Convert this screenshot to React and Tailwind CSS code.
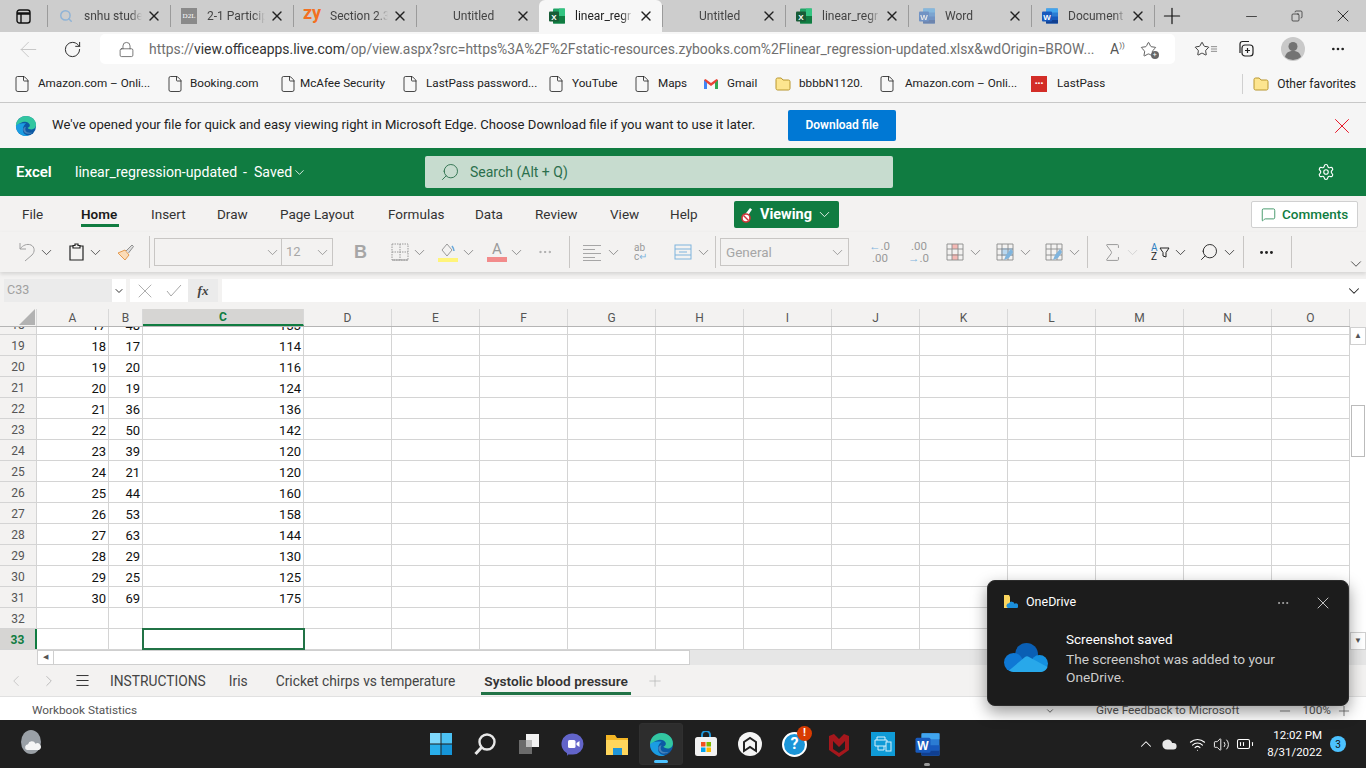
import { ChevronDown, ChevronLeft, ChevronRight, X, Plus, Minus, Copy, ArrowLeft, RotateCw, Lock, Star, File, Settings, Search, MessageSquare, MoreHorizontal, Sigma, Menu, Volume2, Wifi, ChevronUp, BatteryMedium, Cloud } from 'lucide-react'

const font = "font-['Roboto','Liberation_Sans',sans-serif]"

const tabs = [
  { title: 'snhu stude', icon: 'search' },
  { title: '2-1 Particip', icon: 'd2l' },
  { title: 'Section 2.3', icon: 'zy' },
  { title: 'Untitled', icon: 'none' },
  { title: 'linear_regr', icon: 'excel', active: true },
  { title: 'Untitled', icon: 'none' },
  { title: 'linear_regr', icon: 'excel' },
  { title: 'Word', icon: 'wordfaded' },
  { title: 'Document', icon: 'word' },
]

const bookmarks = [
  { label: 'Amazon.com – Onli...', w: 'w-[153px]', gap: 'gap-[7px]' },
  { label: 'Booking.com', w: 'w-[113px]', gap: 'gap-[6px]' },
  { label: 'McAfee Security', w: 'w-[122px]', gap: 'gap-[3px]' },
  { label: 'LastPass password...', w: 'w-[146px]', gap: 'gap-[7px]' },
  { label: 'YouTube', w: 'w-[86px]', gap: 'gap-[7px]' },
  { label: 'Maps', w: 'w-[70px]', gap: 'gap-[7px]' },
  { label: 'Gmail', w: 'w-[71px]', gap: 'gap-[8px]', icon: 'gmail' },
  { label: 'bbbbN1120.', w: 'w-[104px]', gap: 'gap-[7px]', icon: 'folder' },
  { label: 'Amazon.com – Onli...', w: 'w-[153px]', gap: 'gap-[9px]' },
  { label: 'LastPass', w: 'w-[80px]', gap: 'gap-[10px]', icon: 'lastpass' },
]

const ribbon = [
  { label: 'File', w: 'w-[59px]' },
  { label: 'Home', w: 'w-[70px]', active: true },
  { label: 'Insert', w: 'w-[66px]' },
  { label: 'Draw', w: 'w-[63px]' },
  { label: 'Page Layout', w: 'w-[108px]' },
  { label: 'Formulas', w: 'w-[87px]' },
  { label: 'Data', w: 'w-[60px]' },
  { label: 'Review', w: 'w-[75px]' },
  { label: 'View', w: 'w-[60px]' },
  { label: 'Help', w: 'w-[52px]' },
]

const columns = [
  ['A', 'w-[72px]'], ['B', 'w-[34px]'], ['C', 'w-[161px]'], ['D', 'w-[88px]'], ['E', 'w-[88px]'], ['F', 'w-[88px]'], ['G', 'w-[88px]'],
  ['H', 'w-[88px]'], ['I', 'w-[88px]'], ['J', 'w-[88px]'], ['K', 'w-[88px]'], ['L', 'w-[88px]'], ['M', 'w-[88px]'], ['N', 'w-[88px]'], ['O', 'w-[78px]'],
]

const rows = [
  [19, 18, 17, 114], [20, 19, 20, 116], [21, 20, 19, 124], [22, 21, 36, 136], [23, 22, 50, 142], [24, 23, 39, 120], [25, 24, 21, 120],
  [26, 25, 44, 160], [27, 26, 53, 158], [28, 27, 63, 144], [29, 28, 29, 130], [30, 29, 25, 125], [31, 30, 69, 175], [32], [33],
]

function ExcelIcon() {
  return (
    <svg width="18" height="18" viewBox="0 0 18 18">
      <rect x="5" y="1.5" width="12" height="15" rx="1" fill="#21a366" />
      <rect x="5" y="9" width="12" height="7.5" fill="#107c41" />
      <rect x="11" y="1.5" width="6" height="7.5" fill="#33c481" />
      <rect x="1" y="4.5" width="10" height="10" rx="1" fill="#185c37" />
      <text x="6" y="12.5" textAnchor="middle" fontSize="8" fontWeight="700" fill="#fff" fontFamily="Liberation Sans">X</text>
    </svg>
  )
}

function WordIcon({ faded, size = 18 }) {
  return (
    <svg width={size} height={size} viewBox="0 0 18 18" className={faded ? 'opacity-50' : ''}>
      <rect x="5" y="1.5" width="12" height="15" rx="1" fill="#2b7cd3" />
      <rect x="5" y="1.5" width="12" height="4" fill="#41a5ee" />
      <rect x="5" y="9.5" width="12" height="3.5" fill="#185abd" />
      <rect x="5" y="13" width="12" height="3.5" fill="#103f91" />
      <rect x="1" y="4.5" width="10" height="10" rx="1" fill="#185abd" />
      <text x="6" y="12.5" textAnchor="middle" fontSize="8" fontWeight="700" fill="#fff" fontFamily="Liberation Sans">W</text>
    </svg>
  )
}

function EdgeIcon({ size = 22 }) {
  return (
    <svg width={size} height={size} viewBox="0 0 24 24">
      <circle cx="12" cy="12" r="11" fill="#0c59a4" />
      <path d="M1 12C1 5.900 5.900 1 12 1c6 0 11 4.300 11 10 0 3-2.400 4.800-5 4.800-2.200 0-3.800-.8-4.200-1.800 2-.6 2.800-2 2.200-3.600C15 8.200 12.600 7 10 7.400 5 8.200 3 11.500 1 12z" fill="#33c6a0" />
      <path d="M1 12c0 6.100 4.900 11 11 11 1.600 0 2.600-.3 3.600-.8-3.600.3-7-2-7-6.200 0-3 1.800-5.800 3.600-6.600C8 8.800 2.800 9 1 12z" fill="#1b9de2" />
      <path d="M9 15.500c0 3.500 3.500 5.500 7 5 1-.1 2.200-.8 3-1.500-3 .8-6.500.5-7.500-2-.5-1.500-.2-3 .6-4.200C10.500 13 9 14 9 15.500z" fill="#fff" opacity=".25" />
    </svg>
  )
}

function FolderIcon({ size = 18 }) {
  return (
    <svg width={size} height={size} viewBox="0 0 18 18">
      <path d="M2 4.500C2 3.700 2.700 3 3.500 3h3.700l1.800 2h5.500c.8 0 1.500.7 1.500 1.500v7c0 .8-.7 1.500-1.500 1.500h-11C2.700 15 2 14.300 2 13.500z" fill="#fde58f" stroke="#b8962f" strokeWidth="1" />
    </svg>
  )
}

function TabIcon({ icon }) {
  if (icon === 'search') return <Search size={14} strokeWidth={2.5} className="text-[#8fb3d6]" />
  if (icon === 'd2l') return <span className="flex h-4 w-4 items-center justify-center bg-[#8a8a8a] font-['Liberation_Serif',serif] text-[7px] text-white">D2L</span>
  if (icon === 'zy') return <span className="-mt-[7px] text-[18px] leading-none font-bold text-[#f37021]">zy</span>
  if (icon === 'excel') return <ExcelIcon />
  if (icon === 'word') return <WordIcon />
  if (icon === 'wordfaded') return <WordIcon faded />
  return <span className="w-4" />
}

function TabStrip() {
  return (
    <div className="flex h-[32px] items-stretch bg-[#cdcdcd]">
      <div className="flex w-[47px] items-center justify-center">
        <svg width="15" height="15" viewBox="0 0 15 15" fill="none" stroke="#111" strokeWidth="1.400">
          <rect x="1" y="1" width="13" height="13" rx="2.500" />
          <path d="M1 4.500h13" strokeWidth="2.500" />
          <path d="M5 4.500V14" />
        </svg>
      </div>
      {tabs.map((tab, i) => (
        <div key={i} className={`flex w-[123px] items-center pr-[8px] ${tab.active ? 'rounded-t-[6px] bg-[#f7f7f7]' : ''}`}>
          {!tab.active && <span className="h-[22px] w-px bg-[#9b9b9b]" />}
          <span className="ml-px flex w-[34px] items-center justify-center"><TabIcon icon={tab.icon} /></span>
          <span className={`ml-[1px] w-[58px] overflow-hidden text-[12px] whitespace-nowrap [mask-image:linear-gradient(to_right,black_80%,transparent)] ${tab.active ? 'text-[#222]' : 'text-[#444]'}`}>{tab.title}</span>
          <X size={16} strokeWidth={2} className="ml-auto text-[#222]" />
        </div>
      ))}
      <span className="my-[5px] h-[22px] w-px bg-[#9b9b9b]" />
      <div className="flex w-[34px] items-center justify-center"><Plus size={26} strokeWidth={1.1} className="text-[#111]" /></div>
      <div className="ml-auto flex items-center text-[#222]">
        <span className="flex w-[46px] justify-center"><Minus size={17} strokeWidth={1.1} /></span>
        <span className="flex w-[46px] justify-center"><Copy size={12} strokeWidth={1.4} className="-scale-x-100 text-[#222]" /></span>
        <span className="flex w-[46px] justify-center"><X size={20} strokeWidth={1.1} /></span>
      </div>
    </div>
  )
}

function AddressBar() {
  return (
    <div className="flex h-[34px] items-center bg-[#f7f7f7]">
      <div className="flex w-[100px] items-center text-[#333]">
        <span className="flex w-[56px] justify-center"><ArrowLeft size={25} strokeWidth={0.9} className="text-[#c4c4c4]" /></span>
        <span className="flex w-[32px] justify-center"><RotateCw size={19} strokeWidth={1.2} className="text-[#222]" /></span>
      </div>
      <div className="flex h-[30px] w-[1075px] items-center rounded-[5px] bg-white">
        <Lock size={17} strokeWidth={1.1} className="ml-[18px] text-[#555]" />
        <span className="ml-[14px] w-[946px] overflow-hidden text-[13.9px] whitespace-nowrap text-[#6f6f6f]">
          https://<span className="text-[#333]">view.officeapps.live.com</span>/op/view.aspx?src=https%3A%2F%2Fstatic-resources.zybooks.com%2Flinear_regression-updated.xlsx&wdOrigin=BROW...
        </span>
        <span className="ml-[15px] text-[14px] text-[#555]">A<span className="align-super text-[8px]">))</span></span>
        <span className="relative ml-[15px]">
          <Star size={17} strokeWidth={1.2} className="text-[#444]" />
          <span className="absolute right-[-2px] bottom-[-1px] h-[8px] w-[8px] rounded-full bg-[#666] text-center text-[7px] leading-[8px] text-white">+</span>
        </span>
      </div>
      <div className="ml-[19px] flex items-center text-[#222]">
        <span className="flex items-center"><Star size={16} strokeWidth={1.3} /><Menu size={8} strokeWidth={1.5} /></span>
        <svg width="20" height="20" viewBox="0 0 20 20" fill="none" stroke="#222" strokeWidth="1.200" className="ml-[18px]">
          <rect x="6" y="6" width="11" height="11" rx="3" />
          <path d="M11.500 9v5M9 11.500h5" />
          <path d="M4 14V5a2.500 2.500 0 0 1 2.500-2.500H13" />
        </svg>
        <svg width="24" height="24" viewBox="0 0 24 24" className="ml-[25px]">
          <circle cx="12" cy="12" r="12" fill="#c9c9c9" />
          <circle cx="12" cy="9.500" r="4.500" fill="#737373" />
          <path d="M4 20c1-4.500 4-6 8-6s7 1.500 8 6a12 12 0 0 1-16 0z" fill="#737373" />
        </svg>
        <MoreHorizontal size={16} strokeWidth={2} className="ml-[25px]" />
      </div>
    </div>
  )
}

function Bookmarks() {
  return (
    <div className="flex h-[37px] items-center border-b border-[#c8c8c8] bg-[#f7f7f7] pr-[10px] pl-[13px] text-[11.7px] text-[#222]">
      {bookmarks.map((b, i) => (
        <div key={i} className={`flex shrink-0 items-center whitespace-nowrap ${b.w} ${b.gap}`}>
          {b.icon === 'gmail' ? (
            <svg width="16" height="16" viewBox="0 0 16 16"><path d="M1 4v9h3V7l4 3 4-3v6h3V4l-1.500-1L8 7 2.500 3z" fill="#ea4335" /><path d="M1 4v9h3V7z" fill="#4285f4" /><path d="M15 4v9h-3V7z" fill="#34a853" /></svg>
          ) : b.icon === 'folder' ? (
            <FolderIcon />
          ) : b.icon === 'lastpass' ? (
            <span className="flex h-[16px] w-[16px] items-center justify-center bg-[#d32d27] text-[8px] leading-none font-bold text-white">•••</span>
          ) : (
            <File size={18} strokeWidth={1.1} className="shrink-0 text-[#222]" />
          )}
          {b.label}
        </div>
      ))}
      <span className="ml-auto h-[20px] w-px bg-[#d0d0d0]" />
      <div className="ml-[9px] flex items-center gap-[7px] whitespace-nowrap text-[12px]"><FolderIcon />Other favorites</div>
    </div>
  )
}

function InfoBar() {
  return (
    <div className="flex h-[45px] items-center bg-[#f5f5f5]">
      <span className="ml-[15px]"><EdgeIcon /></span>
      <span className="ml-[15px] w-[736px] pb-[2px] text-[13.1px] whitespace-nowrap text-[#222]">We've opened your file for quick and easy viewing right in Microsoft Edge. Choose Download file if you want to use it later.</span>
      <button className="h-[31px] w-[108px] rounded-[2px] bg-[#0078d4] pb-[1px] text-[12px] font-semibold text-white">Download file</button>
      <X size={26} strokeWidth={0.9} className="mr-[11px] ml-auto text-[#e81123]" />
    </div>
  )
}

function ExcelHeader() {
  return (
    <div className="flex h-[48px] items-center bg-[#107c41] text-white">
      <div className="flex w-[425px] items-center pt-[1px] text-[14.1px]">
        <span className="ml-[16px] w-[59px] text-[15px] font-semibold">Excel</span>
        <span>linear_regression-updated</span>
        <span className="ml-[6px]">-</span>
        <span className="ml-[7px]">Saved</span>
        <ChevronDown size={15} strokeWidth={1.3} />
      </div>
      <div className="flex h-[32px] w-[468px] items-center rounded-[2px] bg-[#c7dccf] text-[#2b6f4c]">
        <Search size={20} strokeWidth={1.1} className="ml-[15px] -scale-x-100" />
        <span className="ml-[10px] text-[14px]">Search (Alt + Q)</span>
      </div>
      <Settings size={18} strokeWidth={1.5} className="mr-[31px] ml-auto" />
    </div>
  )
}

function RibbonTabs() {
  return (
    <div className="flex h-[36px] items-center bg-[#f3f2f1] pl-[22px] text-[13.5px] text-[#333]">
      {ribbon.map((t) => (
        <div key={t.label} className={`relative flex h-full items-center ${t.w}`}>
          <span className={t.active ? 'font-semibold text-[#1a1a1a]' : ''}>{t.label}</span>
          {t.active && <span className="absolute bottom-[5px] left-0 h-[3px] w-[38px] bg-[#107c41]" />}
        </div>
      ))}
      <div className="ml-[12px] flex h-[27px] w-[105px] items-center justify-center gap-[3px] rounded-[2px] bg-[#107c41] pt-[1px] text-[14.5px] font-bold text-white">
        <svg width="17" height="17" viewBox="0 0 17 17"><path d="M3 11 10 2l2 1.500-6 9z" fill="#fff" /><circle cx="6" cy="12" r="4" fill="#fff" stroke="#d13438" strokeWidth="1.600" /><path d="M3.500 9.500l5 5" stroke="#d13438" strokeWidth="1.400" /></svg>
        Viewing
        <ChevronDown size={17} strokeWidth={1.2} className="ml-[1px]" />
      </div>
      <button className="mr-[8px] ml-auto flex h-[27px] w-[107px] items-center justify-center gap-[6px] rounded-[2px] border border-[#d0d0d0] bg-white text-[13.5px] font-medium text-[#107c41]">
        <MessageSquare size={15} strokeWidth={1.2} />Comments
      </button>
    </div>
  )
}

function Caret({ c = 'text-[#777]', m }) {
  return (
    <span className={`flex w-[11px] justify-center ${m} ${c}`}>
      <ChevronDown size={17} strokeWidth={1.1} className="shrink-0" />
    </span>
  )
}

function Sep({ m }) {
  return <span className={`h-[32px] w-px bg-[#c8c6c4] ${m}`} />
}

function GridGlyph({ fill, brush }) {
  return (
    <svg width="18" height="18" viewBox="0 0 18 18" fill="none">
      {fill === 'pink' && <><rect x="6" y="1" width="6" height="5" fill="#f4b8b4" /><rect x="6" y="11" width="6" height="6" fill="#f4b8b4" /></>}
      {fill === 'blue' && <rect x="5" y="5" width="12" height="8" fill="#b9d8f0" />}
      <path d="M1 1h16v16H1zM1 6h16M1 12h16M6 1v16M12 1v16" stroke="#8b8b8b" strokeWidth=".9" />
      {brush && <path d="M15 6l-5 6-2 5 5-2 4-6z" fill="#7fb4dd" />}
    </svg>
  )
}

function Toolbar() {
  return (
    <div className="relative z-10 flex h-[40px] items-center bg-[#f3f2f1] pl-[18px] text-[#a6a6a6] shadow-[0_2px_4px_rgba(0,0,0,0.13)]">
      <svg width="18" height="20" viewBox="0 0 18 20" fill="none" stroke="#a0a0a0"><path d="M2 1v6h6" /><path d="M2 7c3-4 7-5.500 11-4 4 2 4 7 1 10l-7 6" /></svg>
      <Caret c="text-[#333]" m="ml-[5px]" />
      <svg width="17" height="18" viewBox="0 0 17 18" fill="none" stroke="#222" strokeWidth="1.200" className="ml-[16px]"><path d="M5 3H2v14h13V3h-3" /><path d="M5 5V2.500h2V1h3v1.500h2V5z" /></svg>
      <Caret c="text-[#333]" m="ml-[5px]" />
      <svg width="17" height="17" viewBox="0 0 17 17" fill="none" className="ml-[16px]"><path d="M1 9l7-3 4 5-4 5z" fill="#fbdcb8" stroke="#e59a4e" /><path d="M9 7l6-6 1.500 1.500-5 6.500" fill="#ddd" stroke="#8f8f8f" /></svg>
      <Sep m="ml-[15px]" />
      <div className="ml-[4px] flex h-[28px] items-center border border-[#c8c6c4]">
        <div className="flex h-full w-[127px] items-center justify-end border-r border-[#c8c6c4] pr-[3px]"><Caret c="text-[#888]" /></div>
        <div className="flex h-full w-[50px] items-center justify-between px-[4px] text-[13px]">12<Caret c="text-[#888]" /></div>
      </div>
      <span className="ml-[21px] font-['Liberation_Sans',sans-serif] text-[18px] font-bold text-[#a6a6a6]">B</span>
      <svg width="18" height="18" viewBox="0 0 18 18" fill="none" stroke="#999" className="ml-[24px]"><path d="M1 1h16v16H1zM9 1v16M1 9h16" strokeDasharray="1.500 1" /><path d="M1 17h16" /></svg>
      <Caret m="ml-[5px]" />
      <span className="ml-[13px] flex w-[20px] flex-col items-center">
        <svg width="16" height="15" viewBox="0 0 16 15" fill="none" stroke="#9a9a9a"><path d="M7 1 2 7l5 6 5-6z" /><path d="M12 3c1.500 2 2 4 2 5" stroke="#6aa9db" strokeWidth="1.500" /></svg>
        <span className="h-[4px] w-[20px] bg-[#fff47a]" />
      </span>
      <Caret m="ml-[5px]" />
      <span className="ml-[13px] flex w-[20px] flex-col items-center">
        <span className="text-[15px] leading-[15px] text-[#9a9a9a]">A</span>
        <span className="h-[5px] w-[20px] bg-[#f28b8b]" />
      </span>
      <Caret m="ml-[4px]" />
      <MoreHorizontal size={16} strokeWidth={1.5} className="ml-[15px]" />
      <Sep m="ml-[16px]" />
      <svg width="18" height="18" viewBox="0 0 18 18" stroke="#a6a6a6" className="ml-[13px]"><path d="M0 2.500h18M0 6.500h12M0 10.500h18M0 14.500h12M0 17.500h18" /></svg>
      <Caret m="ml-[7px]" />
      <span className="ml-[15px] flex w-[18px] flex-col text-[10px] leading-[9px] text-[#999]"><span>ab</span><span>c<span className="text-[#7fb4dd]">↵</span></span></span>
      <svg width="18" height="18" viewBox="0 0 18 18" fill="none" stroke="#7fb4dd" className="ml-[22px]"><rect x="1" y="2" width="16" height="14" /><path d="M1 6h16M1 12h16M5 9h8" /></svg>
      <Caret m="ml-[6px]" />
      <Sep m="ml-[6px]" />
      <div className="ml-[4px] flex h-[28px] w-[129px] items-center justify-between border border-[#c8c6c4] px-[5px] text-[13.5px]">General<Caret c="text-[#888]" /></div>
      <span className="ml-[20px] flex w-[19px] flex-col text-right text-[11.5px] leading-[12px] text-[#999]"><span><span className="text-[#7fb4dd]">←</span>.0</span><span>.00</span></span>
      <span className="ml-[20px] flex w-[19px] flex-col text-right text-[11.5px] leading-[12px] text-[#999]"><span>.00</span><span><span className="text-[#7fb4dd]">→</span>.0</span></span>
      <span className="ml-[19px]"><GridGlyph fill="pink" /></span>
      <Caret m="ml-[6px]" />
      <span className="ml-[15px]"><GridGlyph fill="blue" brush /></span>
      <Caret m="ml-[6px]" />
      <span className="ml-[14px]"><GridGlyph brush /></span>
      <Caret m="ml-[6px]" />
      <Sep m="ml-[7px]" />
      <Sigma size={19} strokeWidth={1} className="ml-[15px] scale-125 text-[#999]" />
      <Caret c="text-[#ccc]" m="ml-[5px]" />
      <span className="ml-[13px] flex w-[19px] items-center text-[#222]">
        <span className="flex w-[8px] flex-col text-[10px] leading-[9px]"><span className="text-[#2f7fc1]">A</span><span>Z</span></span>
        <svg width="11" height="11" viewBox="0 0 11 11" fill="none" stroke="#222"><path d="M1 1h9L7 5.500V10L4 9V5.500z" /></svg>
      </span>
      <Caret c="text-[#222]" m="ml-[5px]" />
      <Search size={20} strokeWidth={1.1} className="ml-[13px] -scale-x-100 text-[#222]" />
      <Caret c="text-[#222]" m="ml-[5px]" />
      <Sep m="ml-[8px]" />
      <MoreHorizontal size={17} strokeWidth={2.2} className="ml-[14px] text-[#222]" />
      <Sep m="ml-[16px]" />
      <ChevronDown size={18} strokeWidth={1.1} className="absolute right-[1px] bottom-[-1px] text-[#333]" />
    </div>
  )
}

function FormulaBar() {
  return (
    <div className="flex h-[36px] items-center gap-[4px] bg-[#f3f2f1] pt-[1px] pl-[4px]">
      <div className="flex h-[23px] w-[122px] items-center bg-[#ebebeb] pl-[3px] text-[12.5px] text-[#a0a0a0]">
        C33
        <span className="ml-auto flex h-full w-[14px] items-center justify-center bg-white"><ChevronDown size={12} strokeWidth={2} className="text-[#333]" /></span>
      </div>
      <div className="flex h-[23px] w-[88px] items-center bg-white">
        <span className="flex w-[30px] justify-center"><X size={24} strokeWidth={0.8} className="text-[#9a9a9a]" /></span>
        <span className="flex w-[28px] justify-center">
          <svg width="16" height="13" viewBox="0 0 16 13" fill="none" stroke="#a8a8a8"><path d="M1 7l4 5L15 1" /></svg>
        </span>
        <span className="flex h-full w-[30px] items-center justify-center bg-[#ebebeb] font-['Liberation_Serif',serif] text-[13px] font-bold text-[#444] italic">fx</span>
      </div>
      <div className="flex h-[23px] flex-1 items-center justify-end bg-white pr-[3px]"><ChevronDown size={18} strokeWidth={1.4} className="text-[#222]" /></div>
    </div>
  )
}

function ColumnHeaders() {
  return (
    <div className="relative z-10 flex h-[19px] border-b border-[#b5b5b5] bg-[#f3f2f1] pt-[1px] text-[12px] text-[#555]">
      <div className="relative w-[37px] border-r border-[#d8d8d8]">
        <svg width="16" height="16" viewBox="0 0 16 16" className="absolute right-[1px] bottom-[1px]"><path d="M16 0v16H0z" fill="#b2b2b2" /></svg>
      </div>
      {columns.map(([c, w]) => (
        <div key={c} className={`flex items-center justify-center border-r border-[#d8d8d8] ${w} ${c === 'C' ? 'border-b-2 border-b-[#107c41] bg-[#d6d5d3] font-bold text-[#107c41]' : ''}`}>{c}</div>
      ))}
    </div>
  )
}

function Cells({ data }) {
  const [num, a, b, c] = data
  const selected = num === 33
  return (
    <div className="flex h-[21px] border-b border-[#d4d4d4]">
      <div className={`flex h-full w-[37px] items-center justify-center border-r border-[#d4d4d4] pt-[1px] text-[12px] ${selected ? 'border-r-2 border-r-[#107c41] bg-[#d6d5d3] font-bold text-[#107c41]' : 'bg-[#f3f2f1] text-[#555]'}`}>{num}</div>
      {columns.map(([col, w], i) => (
        <div key={col} className={`relative box-border h-full shrink-0 border-r border-[#d4d4d4] pt-[2px] pr-[2px] text-right text-[13px] text-[#111] ${w} ${selected && col === 'C' ? 'z-10 outline-2 -outline-offset-1 outline-[#217346]' : ''}`}>
          {i === 0 ? a : i === 1 ? b : i === 2 ? c : ''}
        </div>
      ))}
    </div>
  )
}

function Sheet() {
  return (
    <div className="flex h-[342px] items-start bg-white">
      <div className="w-[1350px]">
        <ColumnHeaders />
        <div className="h-[8px] overflow-hidden">
          <div className="-mt-[13px]"><Cells data={[18, 17, 48, 133]} /></div>
        </div>
        {rows.map((r) => <Cells key={r[0]} data={r} />)}
      </div>
      <div className="flex h-full w-[16px] flex-col items-center bg-white">
        <div className="h-[19px] w-full bg-[#f3f2f1]" />
        <div className="flex h-[18px] w-full items-center justify-center border border-[#d0d0d0] text-[8px] text-[#555]">▲</div>
        <div className="mt-[60px] h-[52px] w-[14px] border border-[#bbb] bg-white" />
        <div className="mt-auto flex h-[18px] w-full items-center justify-center border border-[#d0d0d0] text-[8px] text-[#555]">▼</div>
      </div>
    </div>
  )
}

function SheetTabs() {
  return (
    <div className="flex flex-col">
      <div className="flex h-[15px] items-stretch bg-[#f3f2f1]">
        <div className="ml-[37px] flex w-[17px] items-center justify-center border border-[#cfcfcf] bg-white text-[7px] text-[#555]">◀</div>
        <div className="w-[636px] border-y border-r border-[#cfcfcf] bg-white" />
        <div className="flex-1 bg-[#e6e6e6]" />
      </div>
      <div className="flex h-[32px] items-center border-b border-[#e1e1e1] bg-[#f3f2f1] text-[13.8px] text-[#444]">
        <ChevronLeft size={18} strokeWidth={1.1} className="ml-[7px] text-[#c0c0c0]" />
        <ChevronRight size={18} strokeWidth={1.1} className="ml-[15px] text-[#b0b0b0]" />
        <Menu size={17} strokeWidth={1.3} className="ml-[16px] text-[#222]" />
        <span className="ml-[19px] pt-[1px]">INSTRUCTIONS</span>
        <span className="ml-[23px] pt-[1px]">Iris</span>
        <span className="ml-[28px] pt-[1px]">Cricket chirps vs temperature</span>
        <span className="relative ml-[29px] flex h-full items-center pt-[1px] text-[13.7px] font-semibold text-[#333]">
          Systolic blood pressure
          <span className="absolute right-[-3px] bottom-[1px] left-[-3px] h-[3px] bg-[#217346]" />
        </span>
        <Plus size={18} strokeWidth={1} className="ml-[18px] text-[#b5b5b5]" />
      </div>
    </div>
  )
}

function StatusBar() {
  return (
    <div className="flex h-[23px] items-center bg-white pt-[5px] pl-[32px] text-[11.8px] text-[#555]">
      Workbook Statistics
      <span className="ml-auto flex items-center">
        <ChevronDown size={10} strokeWidth={2} className="mr-[41px]" />
        <span>Give Feedback to Microsoft</span>
        <Minus size={16} strokeWidth={1.1} className="ml-[38px]" />
        <span className="ml-[9px]">100%</span>
        <Plus size={16} strokeWidth={1.1} className="mr-[14px] ml-[5px]" />
      </span>
    </div>
  )
}

function Taskbar() {
  return (
    <div className="flex h-[48px] items-center bg-[#1f1f1f] text-white">
      <svg width="24" height="28" viewBox="0 0 24 28" className="ml-[21px]">
        <ellipse cx="10" cy="12" rx="10" ry="12" fill="#9aa0a6" />
        <path d="M6 20a3 3 0 0 1 1-5.800 4 4 0 0 1 7.500-.5A3.200 3.200 0 0 1 18 20z" fill="#f5f5f5" />
      </svg>
      <div className="ml-[374px] flex items-center">
        <span className="flex h-[48px] w-[44px] items-center justify-center">
          <svg width="24" height="24" viewBox="0 0 24 24"><rect x="1" y="1" width="10.500" height="10.500" fill="#7fd8fb" /><rect x="12.500" y="1" width="10.500" height="10.500" fill="#4cc2f4" /><rect x="1" y="12.500" width="10.500" height="10.500" fill="#29aeea" /><rect x="12.500" y="12.500" width="10.500" height="10.500" fill="#1595d8" /></svg>
        </span>
        <span className="flex h-[48px] w-[44px] items-center justify-center">
          <svg width="24" height="24" viewBox="0 0 24 24" fill="none" stroke="#e8e8e8"><circle cx="14" cy="10" r="7.500" strokeWidth="2.400" /><path d="M8.500 15.500 2.500 22" strokeWidth="3" /></svg>
        </span>
        <span className="flex h-[48px] w-[44px] items-center justify-center">
          <svg width="24" height="24" viewBox="0 0 24 24"><rect x="9" y="2" width="13" height="13" fill="#f2f2f2" /><rect x="2" y="8" width="13" height="14" fill="#6b6b6b" /><rect x="9" y="8" width="6" height="7" fill="#bdbdbd" /></svg>
        </span>
        <span className="flex h-[48px] w-[44px] items-center justify-center">
          <svg width="24" height="24" viewBox="0 0 24 24"><path d="M12 1.500a10.500 10.500 0 0 1 0 21H7l-1 1.500v-2.800A10.500 10.500 0 0 1 12 1.500z" fill="#6264c9" /><rect x="7" y="8" width="7.500" height="8" rx="1.500" fill="#fff" /><path d="M15.500 11l3-2v6l-3-2z" fill="#fff" /></svg>
        </span>
        <span className="flex h-[48px] w-[44px] items-center justify-center">
          <svg width="24" height="24" viewBox="0 0 24 24"><path d="M1 3h9l2 3h11v17H1z" fill="#f4b625" /><path d="M1 8h22v15H1z" fill="#ffd65c" /><rect x="8" y="16" width="9" height="7" fill="#1f95d8" /></svg>
        </span>
        <span className="relative flex h-[42px] w-[44px] items-center justify-center rounded-[3px] border border-[#303030] bg-[#2d2d2d]">
          <EdgeIcon size={25} />
          <span className="absolute bottom-[1px] h-[3px] w-[14px] rounded-full bg-[#4cc2ff]" />
        </span>
        <span className="flex h-[48px] w-[45px] items-center justify-center">
          <svg width="24" height="26" viewBox="0 0 24 26"><path d="M8 7V4a4 4 0 0 1 8 0v3" fill="none" stroke="#1f95d8" strokeWidth="2" /><rect x="1" y="6" width="22" height="19" rx="2.500" fill="#f2f2f2" /><rect x="7" y="11" width="4.500" height="4.500" fill="#f25022" /><rect x="12.500" y="11" width="4.500" height="4.500" fill="#7fba00" /><rect x="7" y="16.500" width="4.500" height="4.500" fill="#00a4ef" /><rect x="12.500" y="16.500" width="4.500" height="4.500" fill="#ffb900" /></svg>
        </span>
        <span className="flex h-[48px] w-[44px] items-center justify-center">
          <svg width="26" height="26" viewBox="0 0 26 26"><circle cx="13" cy="13" r="12" fill="#f4f4f4" /><path d="M7 20V11l6-4 6 4v9l-6-4z" fill="none" stroke="#222" strokeWidth="2" /></svg>
        </span>
        <span className="relative flex h-[48px] w-[45px] items-center justify-center">
          <span className="flex h-[25px] w-[25px] items-center justify-center rounded-full border-[2px] border-white bg-[#1b95d8] text-[16px] leading-none font-bold text-white">?</span>
          <span className="absolute top-[6px] right-[5px] flex h-[15px] w-[15px] items-center justify-center rounded-full bg-[#d83b01] text-[11px] font-bold text-white">!</span>
        </span>
        <span className="flex h-[48px] w-[44px] items-center justify-center">
          <svg width="22" height="26" viewBox="0 0 22 26"><path d="M1 5l5-2 5 5 5-5 5 2v14l-10 7-10-7z" fill="#a5171c" /><path d="M5 10l6 6 6-6v8l-6 4-6-4z" fill="#1f1f1f" /></svg>
        </span>
        <span className="flex h-[48px] w-[44px] items-center justify-center">
          <svg width="24" height="24" viewBox="0 0 24 24" fill="none" stroke="#d8f0fb"><rect width="24" height="24" fill="#0f9bd7" stroke="none" /><path d="M6 8V5h8v3M4 8h12v6H4zM7 14v4h6v-4" /><rect x="15" y="10" width="5" height="9" fill="#0f9bd7" /></svg>
        </span>
        <span className="relative flex h-[48px] w-[44px] items-center justify-center">
          <WordIcon size={27} />
          <span className="absolute bottom-[2px] h-[3px] w-[6px] rounded-full bg-[#9a9a9a]" />
        </span>
      </div>
      <div className="ml-auto flex items-center">
        <ChevronUp size={18} strokeWidth={1.4} />
        <Cloud size={17} fill="#e8e8e8" strokeWidth={0} className="ml-[6px]" />
        <Wifi size={17} strokeWidth={1.5} className="ml-[11px]" />
        <Volume2 size={17} strokeWidth={1.3} className="ml-[7px]" />
        <BatteryMedium size={18} strokeWidth={1.4} className="ml-[6px]" />
        <div className="ml-[12px] flex w-[56px] flex-col items-end text-[11.5px] leading-[17px]">
          <span>12:02 PM</span>
          <span>8/31/2022</span>
        </div>
        <span className="mr-[20px] ml-[8px] flex h-[16px] w-[16px] items-center justify-center rounded-full bg-[#4cc2ff] text-[10px] text-[#111]">3</span>
      </div>
    </div>
  )
}

function Toast() {
  return (
    <div className="absolute top-[580px] left-[987px] h-[126px] w-[362px] rounded-[8px] border border-[#2c2c2c] bg-[#1c1c1c] text-white shadow-[0_6px_16px_rgba(0,0,0,0.4)]">
      <div className="flex h-[43px] items-center pr-[15px] pl-[15px] text-[12.5px]">
        <svg width="15" height="17" viewBox="0 0 15 17"><path d="M1 1h5l1 2v11H1z" fill="#fbd55e" /><path d="M5 14a2.500 2.500 0 0 1 1-4.800 3 3 0 0 1 5.500.5A2.300 2.300 0 0 1 14 14z" fill="#1b8fdc" /></svg>
        <span className="ml-[8px]">OneDrive</span>
        <MoreHorizontal size={14} strokeWidth={1.5} className="mr-[23px] ml-auto text-[#b5b5b5]" />
        <X size={20} strokeWidth={1.1} className="text-[#d0d0d0]" />
      </div>
      <div className="flex pl-[16px]">
        <svg width="44" height="29" viewBox="0 0 44 29" className="mt-[19px]">
          <circle cx="22.500" cy="11.500" r="11.500" fill="#0a5fb4" />
          <circle cx="9.500" cy="19.500" r="9.500" fill="#0f78d4" />
          <circle cx="35.500" cy="20.500" r="8.500" fill="#1490df" />
          <path d="M5 27.500 21 14q2-1.500 4 0l18.500 10A8 8 0 0 1 35.500 29H9.500A9.500 9.500 0 0 1 5 27.500z" fill="#28a8ea" />
        </svg>
        <div className="ml-[18px] w-[225px] pt-[6px]">
          <div className="text-[13.5px] leading-[18px] text-white">Screenshot saved</div>
          <div className="mt-[2px] text-[13.7px] leading-[18px] text-[#cdcdcd]">The screenshot was added to your OneDrive.</div>
        </div>
      </div>
    </div>
  )
}

export default function App() {
  return (
    <div className={`relative h-[768px] w-[1366px] overflow-hidden bg-white ${font}`}>
      <TabStrip />
      <AddressBar />
      <Bookmarks />
      <InfoBar />
      <ExcelHeader />
      <RibbonTabs />
      <Toolbar />
      <FormulaBar />
      <Sheet />
      <SheetTabs />
      <StatusBar />
      <Taskbar />
      <Toast />
    </div>
  )
}
